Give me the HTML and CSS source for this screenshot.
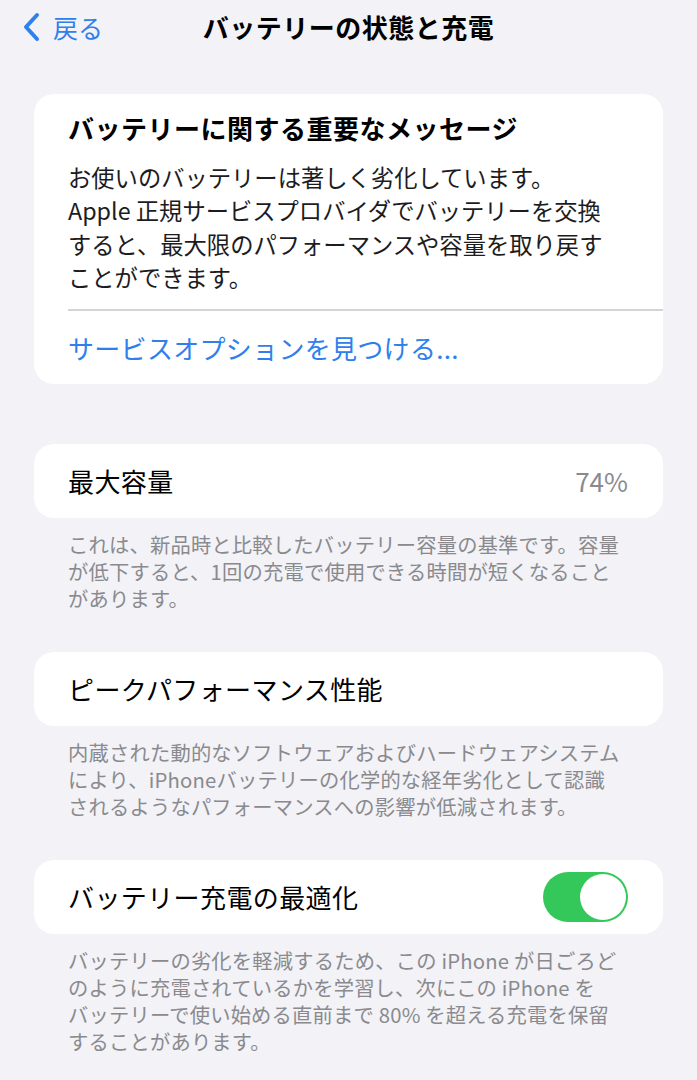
FILE: index.html
```html
<!DOCTYPE html>
<html lang="ja">
<head>
<meta charset="utf-8">
<title>バッテリーの状態と充電</title>
<link rel="stylesheet" href="styles.css">
</head>
<body>
<div class="screen">
  <header class="nav">
    <div class="back">
      <svg class="chevron" width="24" height="32" viewBox="0 0 24 32">
        <path d="M17 4 L6 16 L17 28" fill="none" stroke="#2f80ed" stroke-width="4" stroke-linecap="round" stroke-linejoin="round"/>
      </svg>
      <span class="back-label">戻る</span>
    </div>
    <h1 class="nav-title">バッテリーの状態と充電</h1>
  </header>

  <section class="card message">
    <div class="message-body">
      <h2 class="message-title">バッテリーに関する重要なメッセージ</h2>
      <p class="message-text">お使いのバッテリーは著しく劣化しています。<br>Apple 正規サービスプロバイダでバッテリーを交換<br>すると、最大限のパフォーマンスや容量を取り戻す<br>ことができます。</p>
    </div>
    <div class="divider"></div>
    <div class="link-row">サービスオプションを見つける...</div>
  </section>

  <section class="card row first-row">
    <span class="label">最大容量</span>
    <span class="value">74%</span>
  </section>
  <p class="footnote">これは、新品時と比較したバッテリー容量の基準です。容量<br>が低下すると、1回の充電で使用できる時間が短くなること<br>があります。</p>

  <section class="card row">
    <span class="label">ピークパフォーマンス性能</span>
  </section>
  <p class="footnote">内蔵された動的なソフトウェアおよびハードウェアシステム<br>により、iPhoneバッテリーの化学的な経年劣化として認識<br>されるようなパフォーマンスへの影響が低減されます。</p>

  <section class="card row">
    <span class="label">バッテリー充電の最適化</span>
    <span class="toggle"><span class="knob"></span></span>
  </section>
  <p class="footnote">バッテリーの劣化を軽減するため、この iPhone が日ごろど<br>のように充電されているかを学習し、次にこの iPhone を<br>バッテリーで使い始める直前まで 80% を超える充電を保留<br>することがあります。</p>
</div>
</body>
</html>
```

FILE: styles.css
```css
* { box-sizing: border-box; margin: 0; padding: 0; }
html, body {
  background: #f2f2f7;
}
body {
  font-family: "Noto Sans CJK JP", "Noto Sans", sans-serif;
  color: #000;
  width: 697px;
  overflow: hidden;
}
.screen {
  padding: 0 34px;
}
.nav {
  position: relative;
  height: 56px;
  display: flex;
  align-items: center;
  justify-content: center;
}
.back {
  position: absolute;
  left: -14px;
  top: 10px;
  display: flex;
  align-items: center;
  gap: 9px;
  color: #2f80ed;
}
.back-label {
  font-size: 25px;
  line-height: 34px;
}
.chevron { display: block; }
.nav-title {
  font-size: 26px;
  font-weight: 700;
  line-height: 34px;
  margin-top: -2px;
  letter-spacing: 0.5px;
}
.card {
  background: #fff;
  border-radius: 20px;
}
.message {
  margin-top: 38px;
}
.message-body {
  padding: 17px 34px 15px;
}
.message-title {
  font-size: 26px;
  font-weight: 700;
  line-height: 34px;
  letter-spacing: 0.5px;
}
.message-text {
  margin-top: 16px;
  font-size: 23.3px;
  line-height: 33.3px;
  color: #1c1c1e;
  white-space: nowrap;
}
.divider {
  margin-left: 34px;
  height: 1.5px;
  background: #d4d4d8;
}
.link-row {
  height: 73px;
  display: flex;
  align-items: center;
  padding: 0 34px;
  font-size: 26px;
  color: #2f80ed;
  letter-spacing: 0.3px;
}
.row {
  height: 74px;
  display: flex;
  align-items: center;
  justify-content: space-between;
  padding: 0 35px 0 34px;
  margin-top: 40px;
}
.first-row {
  margin-top: 60px;
}
.label {
  font-size: 26px;
  letter-spacing: 0.4px;
}
.value {
  font-size: 26px;
  color: #8a8a8e;
}
.footnote {
  margin-top: 13px;
  padding: 0 34px;
  font-size: 20.3px;
  line-height: 27px;
  color: #8a8a8e;
  letter-spacing: 0.2px;
  white-space: nowrap;
}
.toggle {
  width: 85px;
  height: 50px;
  border-radius: 25px;
  background: #34c759;
  position: relative;
  flex: none;
}
.knob {
  position: absolute;
  right: 2px;
  top: 2px;
  width: 46px;
  height: 46px;
  border-radius: 50%;
  background: #fff;
}
```
